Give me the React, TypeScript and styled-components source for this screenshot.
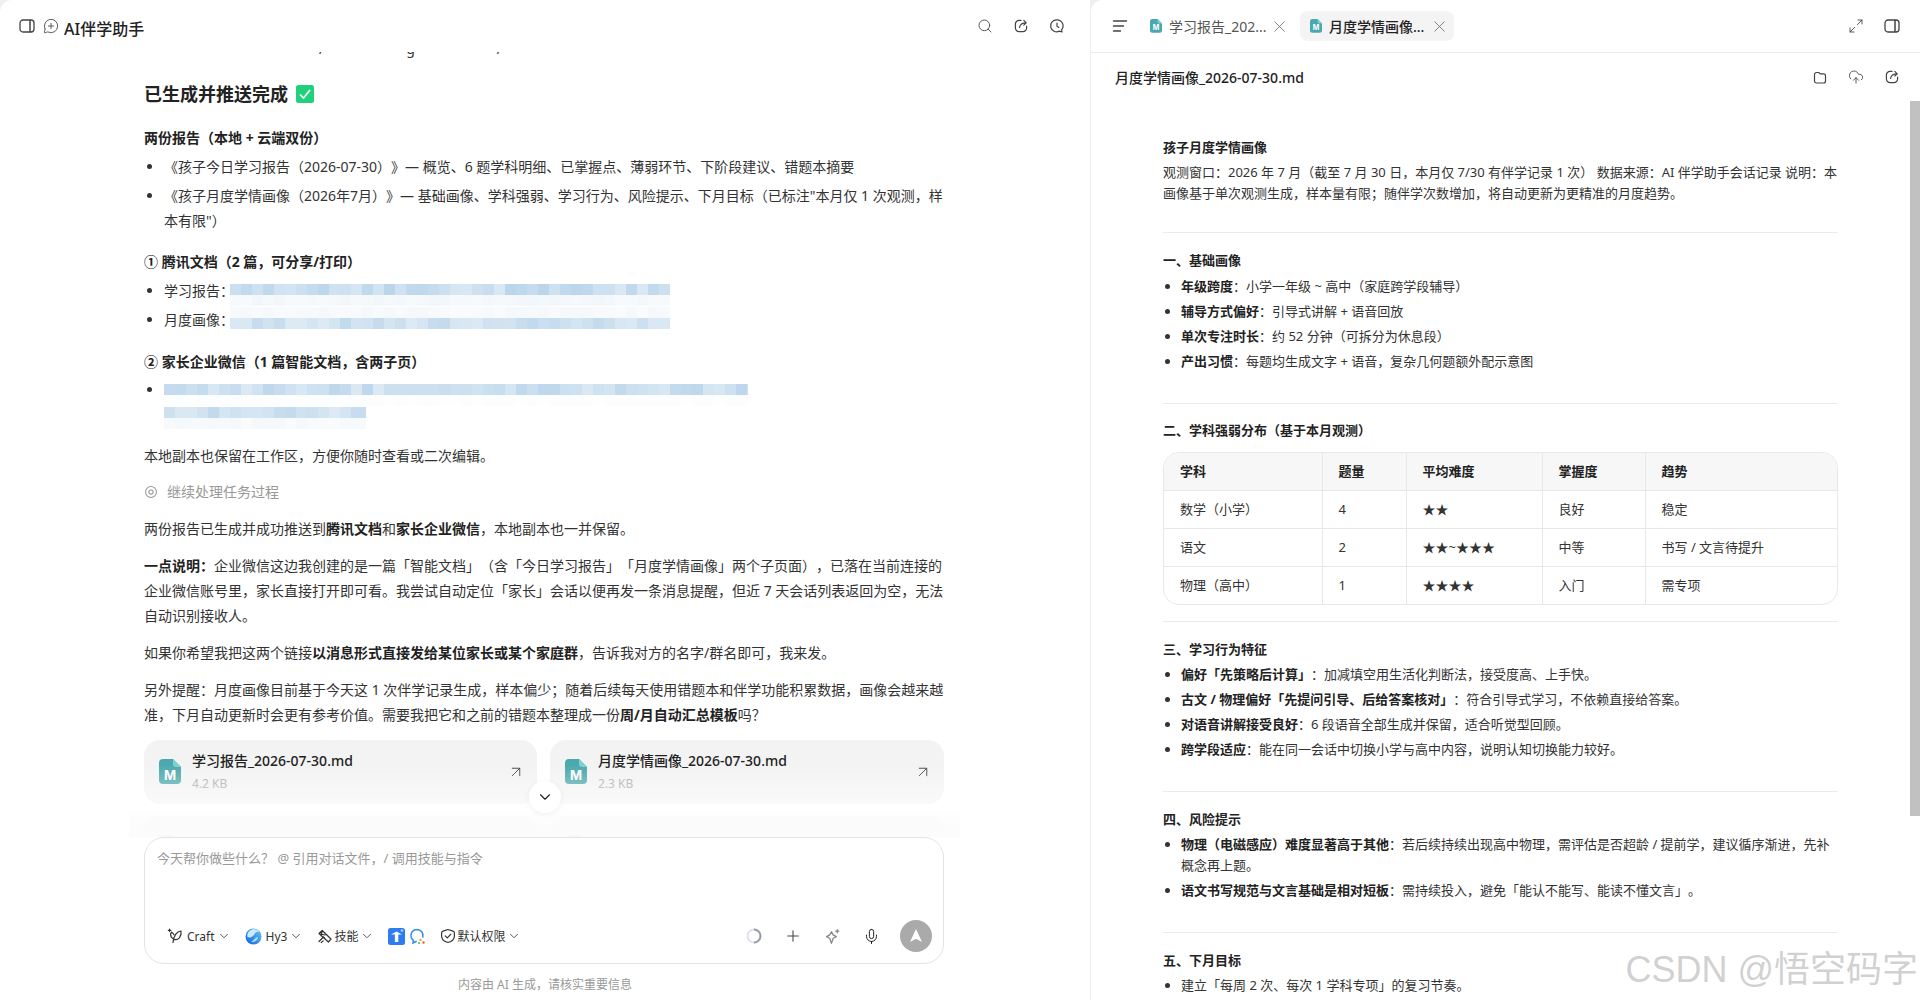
import React from 'react'
import styled, { createGlobalStyle } from 'styled-components'
import { ArrowUpRight, ChevronDown, CloudUpload, Maximize2, MessageCirclePlus, Mic, Plus, Search, X } from 'lucide-react'

const GlobalStyle = createGlobalStyle`
  html, body {
    margin: 0;
    height: 100%;
    overflow: hidden;
    background: #efefef;
  }
  body, button {
    font-family: 'Noto Sans', 'Noto Sans CJK SC', sans-serif;
    text-spacing-trim: space-all;
  }
`

const Screen = styled.div`
  display: flex;
  width: 1920px;
  height: 1000px;
  position: relative;
  overflow: hidden;
`

const ChatPane = styled.section`
  width: 1090px;
  height: 1000px;
  background: #fff;
  border-radius: 12px 0 0 0;
  display: flex;
  flex-direction: column;
`

const ChatHeader = styled.header`
  height: 52px;
  flex: none;
  display: flex;
  align-items: center;
  justify-content: space-between;
  padding: 0 25px 0 19px;
  color: #444;
`

const HeaderGroup = styled.div<{ $gap: number }>`
  display: flex;
  align-items: center;
  gap: ${(p) => p.$gap}px;
`

const AppTitle = styled.h1`
  margin: 5px 0 0 -3px;
  font-size: 16px;
  line-height: 24px;
  font-weight: 500;
  color: #222;
`

const ChatBody = styled.div`
  flex: 1;
  min-height: 0;
  position: relative;
  overflow: hidden;
  padding: 0 146px 0 144px;
  font-size: 14px;
  line-height: 25px;
  color: #333;
`

const ClippedLine = styled.div`
  height: 8px;
  overflow: hidden;
  display: flex;
  gap: 82px;
  padding-left: 175px;
  line-height: 0;
  color: #333;
  span {
    margin-top: -3px;
  }
`

const DoneTitle = styled.h2`
  display: flex;
  align-items: center;
  gap: 8px;
  margin: 20px 0 0;
  font-size: 18px;
  line-height: 28px;
  font-weight: 700;
  color: #222;
`

const SectionTitle = styled.h3<{ $top: number }>`
  margin: ${(p) => p.$top}px 0 0;
  font-size: 14px;
  line-height: 25px;
  font-weight: 700;
  color: #222;
`

const BulletList = styled.ul<{ $top: number }>`
  margin: ${(p) => p.$top}px 0 0;
  padding: 0 0 0 20px;
  li + li {
    margin-top: 4px;
  }
`

const Para = styled.p<{ $top?: number }>`
  margin: ${(p) => p.$top ?? 12}px 0 0;
  b {
    font-weight: 700;
    color: #222;
  }
`

const Continue = styled.div`
  display: flex;
  align-items: center;
  gap: 9px;
  margin-top: 11px;
  color: #999;
`

const CardGrid = styled.div<{ $top: number }>`
  display: grid;
  grid-template-columns: 393px 394px;
  column-gap: 13px;
  margin-top: ${(p) => p.$top}px;
`

const FileCard = styled.div`
  height: 64px;
  display: flex;
  align-items: center;
  gap: 11px;
  padding: 0 12px 0 15px;
  background: #f3f3f3;
  border-radius: 16px;
  color: #444;
`

const FileMeta = styled.div`
  flex: 1;
  min-width: 0;
`

const FileName = styled.div`
  font-size: 14px;
  line-height: 22px;
  font-weight: 500;
  color: #222;
`

const FileSize = styled.div`
  font-size: 12px;
  line-height: 20px;
  color: #aaa;
  margin-top: 2px;
`

const Fade = styled.div`
  position: absolute;
  left: 129px;
  right: 130px;
  bottom: 0;
  height: 72px;
  background: linear-gradient(
    rgba(255, 255, 255, 0),
    rgba(255, 255, 255, 0.55) 53%,
    rgba(253, 253, 253, 0.84) 69%,
    rgba(252, 252, 252, 0.97)
  );
`

const ScrollDown = styled.button`
  position: absolute;
  left: 529px;
  top: 729px;
  width: 32px;
  height: 32px;
  padding: 0;
  border: 0;
  border-radius: 50%;
  background: #fff;
  box-shadow: 0 1px 6px rgba(0, 0, 0, 0.06);
  display: grid;
  place-items: center;
  color: #222;
`

const Composer = styled.div`
  flex: none;
  width: 800px;
  height: 127px;
  margin-left: 144px;
  box-sizing: border-box;
  border: 1px solid #e4e4e4;
  border-radius: 20px;
  background: #fff;
  display: flex;
  flex-direction: column;
  justify-content: space-between;
  padding: 10px 11px 11px 12px;
`

const Placeholder = styled.div`
  font-size: 13px;
  line-height: 20px;
  color: #999;
`

const Toolbar = styled.div`
  display: flex;
  align-items: center;
  justify-content: space-between;
  height: 32px;
  padding-left: 10px;
`

const ToolGroup = styled.div`
  display: flex;
  align-items: center;
  gap: 14px;
`

const ToolChip = styled.div<{ $gap?: number }>`
  display: flex;
  align-items: center;
  gap: ${(p) => p.$gap ?? 4}px;
  font-size: 12px;
  color: #333;
  svg.chev {
    color: #444;
    margin-left: ${(p) => 2 - (p.$gap ?? 4)}px;
  }
`

const ActionGroup = styled.div`
  display: flex;
  align-items: center;
  gap: 22px;
  color: #444;
`

const SendButton = styled.button`
  width: 32px;
  height: 32px;
  margin-left: -2px;
  padding: 0;
  border: 0;
  border-radius: 50%;
  background: #aaa;
  display: grid;
  place-items: center;
`

const Disclaimer = styled.div`
  flex: none;
  margin: 11px 0 5px;
  font-size: 12px;
  line-height: 20px;
  text-align: center;
  color: #999;
`

const DocPane = styled.section`
  flex: 1;
  height: 1000px;
  margin-left: 1px;
  background: #fff;
  border-radius: 12px 0 0 0;
  display: flex;
  flex-direction: column;
`

const TabBar = styled.header`
  height: 53px;
  flex: none;
  box-sizing: border-box;
  padding: 0 20px 0 21px;
  display: flex;
  align-items: center;
  justify-content: space-between;
  border-bottom: 1px solid #ebebeb;
  color: #444;
`

const Tabs = styled.div`
  display: flex;
  align-items: center;
`

const MenuSlot = styled.div`
  display: flex;
  margin-right: 12px;
`

const Tab = styled.div<{ $active?: boolean }>`
  display: flex;
  align-items: center;
  gap: 7px;
  height: 30px;
  width: 154px;
  margin-left: ${(p) => (p.$active ? 6 : 0)}px;
  box-sizing: border-box;
  padding: 0 3px 0 10px;
  border-radius: 8px;
  font-size: 14px;
  white-space: nowrap;
  background: ${(p) => (p.$active ? '#f4f4f4' : 'transparent')};
  color: ${(p) => (p.$active ? '#222' : '#555')};
  font-weight: ${(p) => (p.$active ? 500 : 400)};
  svg.close {
    color: #666;
    flex: none;
    margin-left: -2px;
  }
`

const TabLabel = styled.span`
  width: 96px;
  flex: none;
`

const FileBar = styled.div`
  height: 48px;
  flex: none;
  box-sizing: border-box;
  padding: 0 20px 0 24px;
  display: flex;
  align-items: center;
  justify-content: space-between;
  font-size: 14px;
  font-weight: 500;
  color: #222;
  svg {
    color: #444;
  }
`

const DocScroll = styled.div`
  flex: 1;
  min-height: 0;
  position: relative;
  overflow: hidden;
  padding: 36px 82px 0 72px;
  font-size: 13px;
  line-height: 21px;
  color: #333;
`

const ScrollThumb = styled.div`
  position: absolute;
  right: 0;
  top: 0;
  width: 10px;
  height: 715px;
  background: #c1c1c1;
`

const DocTitle = styled.h2`
  margin: 0;
  font-size: 13px;
  line-height: 21px;
  font-weight: 700;
  color: #222;
`

const DocText = styled.p`
  margin: 4px 0 0;
`

const Rule = styled.hr<{ $top: number }>`
  height: 1px;
  border: 0;
  margin: ${(p) => p.$top}px 0 0;
  background: #ebebeb;
`

const DocHeading = styled.h3<{ $top: number }>`
  margin: ${(p) => p.$top}px 0 0;
  font-size: 13px;
  line-height: 25px;
  font-weight: 700;
  color: #222;
`

const DocList = styled.ul<{ $top?: number }>`
  margin: ${(p) => p.$top ?? 0}px 0 0;
  padding: 0 0 0 18px;
  li {
    padding: 2px 0;
  }
  b {
    font-weight: 700;
    color: #222;
  }
`

const TableBox = styled.div`
  margin-top: 9px;
  border: 1px solid #e8e8e8;
  border-radius: 16px;
  overflow: hidden;
`

const Table = styled.table`
  width: 100%;
  table-layout: fixed;
  border-collapse: collapse;
  th,
  td {
    height: 38px;
    box-sizing: border-box;
    padding: 0 16px;
    text-align: left;
    border-left: 1px solid #e8e8e8;
    border-top: 1px solid #e8e8e8;
  }
  th:first-child,
  td:first-child {
    border-left: 0;
  }
  th {
    border-top: 0;
    height: 37px;
    background: #f7f7f7;
    font-weight: 700;
    color: #222;
  }
`

const Watermark = styled.div`
  position: absolute;
  right: 2px;
  bottom: 6px;
  font-family: 'Liberation Sans', 'Noto Sans CJK SC', sans-serif;
  font-size: 36px;
  line-height: 48px;
  color: rgba(170, 170, 170, 0.55);
  text-shadow: 0 0 1px rgba(255, 255, 255, 0.9);
  white-space: nowrap;
`

const MosaicSvg = styled.svg<{ $top: number; $left: number }>`
  display: inline-block;
  vertical-align: top;
  margin: ${(p) => p.$top}px 0 -12px ${(p) => p.$left}px;
`

const IconSvg = styled.svg`
  flex: none;
`

const Mosaic = ({ width, alphas, top = 0, left = 0 }: { width: number; alphas: number[]; top?: number; left?: number }) => {
  const cols = Math.ceil(width / 11)
  return (
    <MosaicSvg $top={top} $left={left} width={width} height={alphas.length * 11}>
      {alphas.map((alpha, row) =>
        Array.from({ length: cols }, (_, col) => {
          const wave = Math.abs(Math.sin((col + 1) * 12.9898 + (row + 1) * width) * 43758.5453) % 1
          return (
            <rect
              key={`${row}-${col}`}
              x={col * 11}
              y={row * 11}
              width={11}
              height={11}
              fill="#b0cfe8"
              fillOpacity={alpha * (0.6 + wave * 0.5)}
            />
          )
        }),
      )}
    </MosaicSvg>
  )
}

const FileIcon = ({ size }: { size: number }) => (
  <IconSvg width={size} height={size * 1.14} viewBox="0 0 22 25">
    <path d="M4 0h10l8 8v13a4 4 0 0 1-4 4H4a4 4 0 0 1-4-4V4a4 4 0 0 1 4-4z" fill="#4ba8ad" />
    <path d="M14 0l8 8h-5a3 3 0 0 1-3-3z" fill="#7fd0d0" />
    <text x="11" y="21" textAnchor="middle" fontSize="13" fontWeight="700" fill="#fff" fontFamily="Inter, sans-serif">
      M
    </text>
  </IconSvg>
)

const Icon = ({ children, size = 16 }: { children: React.ReactNode; size?: number }) => (
  <IconSvg
    width={size}
    height={size}
    viewBox="0 0 16 16"
    fill="none"
    stroke="currentColor"
    strokeWidth="1.2"
    strokeLinecap="round"
    strokeLinejoin="round"
  >
    {children}
  </IconSvg>
)

const PanelIcon = () => (
  <Icon>
    <rect x="1" y="2" width="14" height="12" rx="3" strokeWidth="1.3" />
    <path d="M11 2.600v10.800" strokeWidth="1.500" />
  </Icon>
)

const ShareIcon = () => (
  <Icon>
    <path d="M8 2.400H6a3.600 3.600 0 0 0-3.600 3.600v4A3.600 3.600 0 0 0 6 13.600h4a3.600 3.600 0 0 0 3.600-3.600V8" />
    <path d="M6.500 9.500C7 6.500 9 4.800 13 4.800M10.800 2.400L13.200 4.800 10.800 7.200" />
  </Icon>
)

const HistoryIcon = () => (
  <Icon>
    <path d="M8 1.800a6 6 0 0 1 4.600 9.900L13 14l-2.600-.9A6 6 0 1 1 8 1.800z" />
    <path d="M8 5v3.200l1.800 1.200" />
  </Icon>
)

const MenuIcon = () => (
  <Icon>
    <path d="M1.500 3h13M1.500 8h10M1.500 13h7" strokeWidth="1.400" />
  </Icon>
)

const FolderIcon = () => (
  <Icon>
    <path d="M2.500 5.500A2 2 0 0 1 4.500 3.500h2.200l1.500 1.400h3.300a2 2 0 0 1 2 2V12a2 2 0 0 1-2 2h-7a2 2 0 0 1-2-2z" />
  </Icon>
)

const TargetIcon = () => (
  <Icon size={14}>
    <circle cx="8" cy="8" r="6.200" />
    <circle cx="8" cy="8" r="2.400" />
  </Icon>
)

const CraftIcon = () => (
  <Icon>
    <path d="M6 14.500c.4-3.400 1-6 2.600-8.200C10 4.400 12 3.200 14 3c.4 2.400-.2 5-1.600 6.800-1.400 1.600-3.400 2-5.200 1.600" />
    <path d="M6.600 11c-1.800-.8-3-2.400-3-4.400 0-1 .4-1.800 1-2.400 1 .6 1.800 1.400 2.400 2.600" />
    <path d="M2.600 1v2.600M1.300 2.300h2.600" />
  </Icon>
)

const SkillIcon = () => (
  <Icon>
    <path d="M2 5.500L5.200 2.500 14 11l-2.600 3zM5.200 2.500l-1 5.500M2 5.500l6 1.500" />
    <path d="M2 13.500l4.500-4.500 1.200 1.200M4.200 14.500l2-1.600" />
  </Icon>
)

const ScopeIcon = () => (
  <Icon>
    <path d="M8 1.500l5 1.600c1 .3 1.400 1 1.400 2v3c0 3.200-3 5.600-6.400 6.400C4.600 13.700 1.600 11.300 1.600 8.100v-3c0-1 .4-1.700 1.400-2z" />
    <path d="M5.200 7.800l2.100 2.100 3.600-3.800" />
  </Icon>
)

const SparkIcon = () => (
  <Icon size={17}>
    <path d="M7 3.500l1.600 3 3 1.600-3 1.600L7 14.500l-1.600-4.800-3-1.600 3-1.600z" stroke="#888" />
    <path d="M12.500 1.500v3M11 3h3" stroke="#888" />
  </Icon>
)

const HyLogo = () => (
  <IconSvg width="17" height="17" viewBox="0 0 17 17">
    <defs>
      <linearGradient id="hy" x1="0" y1="1" x2="1" y2="0">
        <stop offset="0" stopColor="#0b63e0" />
        <stop offset="1" stopColor="#6bc6f5" />
      </linearGradient>
    </defs>
    <circle cx="8.500" cy="8.500" r="8" fill="url(#hy)" />
    <path d="M2.500 9c3 1.500 6-1 7-3s3-2.500 5-2c-1-1.500-3.500-3-6-2.800C4 2 1.500 5.500 2.500 9z" fill="#cfeafa" />
    <path d="M6 14c3 .5 6-1 7-4 .4-1.200-1-1.500-2-.5C9.500 11 8 12.800 6 14z" fill="#a8dcf7" />
  </IconSvg>
)

const DocsLogo = () => (
  <IconSvg width="17" height="17" viewBox="0 0 17 17">
    <rect width="17" height="17" rx="2.500" fill="#2f7bf2" />
    <path d="M3 6.500L8.500 3.500 14 6.500H10.300V14H6.900V6.500z" fill="#fff" />
    <circle cx="14" cy="2.600" r="1.400" fill="#8fd3ff" />
  </IconSvg>
)

const QqSearchLogo = () => (
  <IconSvg width="17" height="17" viewBox="0 0 17 17" fill="none">
    <path
      d="M8 1.500a6 6 0 0 1 5.800 7.500M8 1.500A6 6 0 0 0 4.400 12.300L4 15l3.200-1.500"
      stroke="#2d8cf0"
      strokeWidth="1.500"
      strokeLinecap="round"
    />
    <circle cx="11.500" cy="12" r="1.200" fill="#f5a623" />
    <circle cx="14.500" cy="14.500" r="1.200" fill="#ef5b4c" />
    <circle cx="10" cy="15" r="1" fill="#36c46b" />
  </IconSvg>
)

const Spinner = () => (
  <IconSvg width="16" height="16" viewBox="0 0 16 16" fill="none">
    <circle cx="8" cy="8" r="6.500" stroke="#dfe2ea" strokeWidth="2" />
    <path d="M8 1.500a6.500 6.500 0 0 1 0 13" stroke="#9a9ca8" strokeWidth="2" />
  </IconSvg>
)

const CheckBadge = () => (
  <IconSvg width="18" height="18" viewBox="0 0 18 18">
    <rect width="18" height="18" rx="2.500" fill="#21d07a" />
    <path d="M4 9.500l3.500 3.500L14 5" fill="none" stroke="#fff" strokeWidth="1.700" />
  </IconSvg>
)

const Chev = () => <ChevronDown className="chev" size={14} strokeWidth={1.5} />

export default function App() {
  return (
    <Screen>
      <GlobalStyle />
      <ChatPane>
        <ChatHeader>
          <HeaderGroup $gap={8}>
            <PanelIcon />
            <MessageCirclePlus size={16} strokeWidth={1.3} />
            <AppTitle>AI伴学助手</AppTitle>
          </HeaderGroup>
          <HeaderGroup $gap={20}>
            <Search size={16} strokeWidth={1.3} />
            <ShareIcon />
            <HistoryIcon />
          </HeaderGroup>
        </ChatHeader>
        <ChatBody>
          <ClippedLine>
            <span>/</span>
            <span>g</span>
            <span>/</span>
          </ClippedLine>
          <DoneTitle>
            已生成并推送完成
            <CheckBadge />
          </DoneTitle>
          <SectionTitle $top={17}>两份报告（本地 + 云端双份）</SectionTitle>
          <BulletList $top={4}>
            <li>《孩子今日学习报告（2026-07-30）》— 概览、6 题学科明细、已掌握点、薄弱环节、下阶段建议、错题本摘要</li>
            <li>《孩子月度学情画像（2026年7月）》— 基础画像、学科强弱、学习行为、风险提示、下月目标（已标注"本月仅 1 次观测，样本有限"）</li>
          </BulletList>
          <SectionTitle $top={16}>① 腾讯文档（2 篇，可分享/打印）</SectionTitle>
          <BulletList $top={4}>
            <li>
              学习报告：
              <Mosaic width={440} alphas={[0.8, 0.16]} top={6} left={-4} />
            </li>
            <li>
              月度画像：
              <Mosaic width={440} alphas={[0.12, 0.7]} left={-4} />
            </li>
          </BulletList>
          <SectionTitle $top={17}>② 家长企业微信（1 篇智能文档，含两子页）</SectionTitle>
          <BulletList $top={3}>
            <li>
              <Mosaic width={584} alphas={[0.75, 0.04]} top={7} />
              <br />
              <Mosaic width={202} alphas={[0.7, 0.12]} top={5} />
            </li>
          </BulletList>
          <Para $top={16}>本地副本也保留在工作区，方便你随时查看或二次编辑。</Para>
          <Continue>
            <TargetIcon />
            继续处理任务过程
          </Continue>
          <Para>
            两份报告已生成并成功推送到<b>腾讯文档</b>和<b>家长企业微信</b>，本地副本也一并保留。
          </Para>
          <Para>
            <b>一点说明：</b>企业微信这边我创建的是一篇「智能文档」（含「今日学习报告」「月度学情画像」两个子页面），已落在当前连接的企业微信账号里，家长直接打开即可看。我尝试自动定位「家长」会话以便再发一条消息提醒，但近 7 天会话列表返回为空，无法自动识别接收人。
          </Para>
          <Para>
            如果你希望我把这两个链接<b>以消息形式直接发给某位家长或某个家庭群</b>，告诉我对方的名字/群名即可，我来发。
          </Para>
          <Para>
            另外提醒：月度画像目前基于今天这 1 次伴学记录生成，样本偏少；随着后续每天使用错题本和伴学功能积累数据，画像会越来越准，下月自动更新时会更有参考价值。需要我把它和之前的错题本整理成一份<b>周/月自动汇总模板</b>吗？
          </Para>
          <CardGrid $top={13}>
            <FileCard>
              <FileIcon size={22} />
              <FileMeta>
                <FileName>学习报告_2026-07-30.md</FileName>
                <FileSize>4.2 KB</FileSize>
              </FileMeta>
              <ArrowUpRight size={18} strokeWidth={1.3} />
            </FileCard>
            <FileCard>
              <FileIcon size={22} />
              <FileMeta>
                <FileName>月度学情画像_2026-07-30.md</FileName>
                <FileSize>2.3 KB</FileSize>
              </FileMeta>
              <ArrowUpRight size={18} strokeWidth={1.3} />
            </FileCard>
          </CardGrid>
          <CardGrid $top={12}>
            <FileCard>
              <FileIcon size={22} />
              <FileMeta>
                <FileName>错题本.md</FileName>
              </FileMeta>
            </FileCard>
            <FileCard>
              <FileIcon size={22} />
              <FileMeta>
                <FileName>语文讲解_中继成立.md</FileName>
              </FileMeta>
            </FileCard>
          </CardGrid>
          <Fade />
          <ScrollDown>
            <ChevronDown size={18} strokeWidth={1.5} />
          </ScrollDown>
        </ChatBody>
        <Composer>
          <Placeholder>今天帮你做些什么？ @ 引用对话文件，/ 调用技能与指令</Placeholder>
          <Toolbar>
            <ToolGroup>
              <ToolChip>
                <CraftIcon />
                Craft
                <Chev />
              </ToolChip>
              <ToolChip>
                <HyLogo />
                Hy3
                <Chev />
              </ToolChip>
              <ToolChip $gap={1}>
                <SkillIcon />
                技能
                <Chev />
              </ToolChip>
              <ToolChip>
                <DocsLogo />
                <QqSearchLogo />
              </ToolChip>
              <ToolChip $gap={1}>
                <ScopeIcon />
                默认权限
                <Chev />
              </ToolChip>
            </ToolGroup>
            <ActionGroup>
              <Spinner />
              <Plus size={18} strokeWidth={1.4} />
              <SparkIcon />
              <Mic size={17} strokeWidth={1.4} color="#222" />
              <SendButton>
                <svg width="16" height="16" viewBox="0 0 16 16">
                  <path d="M8 1l6 13-6-3.200L2 14z" fill="#fff" />
                </svg>
              </SendButton>
            </ActionGroup>
          </Toolbar>
        </Composer>
        <Disclaimer>内容由 AI 生成，请核实重要信息</Disclaimer>
      </ChatPane>
      <DocPane>
        <TabBar>
          <Tabs>
            <MenuSlot>
              <MenuIcon />
            </MenuSlot>
            <Tab>
              <FileIcon size={12} />
              <TabLabel>学习报告_202...</TabLabel>
              <X className="close" size={19} strokeWidth={1} />
            </Tab>
            <Tab $active>
              <FileIcon size={12} />
              <TabLabel>月度学情画像...</TabLabel>
              <X className="close" size={19} strokeWidth={1} />
            </Tab>
          </Tabs>
          <HeaderGroup $gap={20}>
            <Maximize2 size={16} strokeWidth={1.3} />
            <PanelIcon />
          </HeaderGroup>
        </TabBar>
        <FileBar>
          月度学情画像_2026-07-30.md
          <HeaderGroup $gap={20}>
            <FolderIcon />
            <CloudUpload size={16} strokeWidth={1.3} />
            <ShareIcon />
          </HeaderGroup>
        </FileBar>
        <DocScroll>
          <ScrollThumb />
          <DocTitle>孩子月度学情画像</DocTitle>
          <DocText>
            观测窗口：2026 年 7 月（截至 7 月 30 日，本月仅 7/30 有伴学记录 1 次） 数据来源：AI 伴学助手会话记录 说明：本画像基于单次观测生成，样本量有限；随伴学次数增加，将自动更新为更精准的月度趋势。
          </DocText>
          <Rule $top={28} />
          <DocHeading $top={15}>一、基础画像</DocHeading>
          <DocList $top={1}>
            <li><b>年级跨度</b>：小学一年级 ~ 高中（家庭跨学段辅导）</li>
            <li><b>辅导方式偏好</b>：引导式讲解 + 语音回放</li>
            <li><b>单次专注时长</b>：约 52 分钟（可拆分为休息段）</li>
            <li><b>产出习惯</b>：每题均生成文字 + 语音，复杂几何题额外配示意图</li>
          </DocList>
          <Rule $top={29} />
          <DocHeading $top={14}>二、学科强弱分布（基于本月观测）</DocHeading>
          <TableBox>
            <Table>
              <colgroup>
                <col width={158} />
                <col width={84} />
                <col width={136} />
                <col width={103} />
                <col />
              </colgroup>
              <thead>
                <tr>
                  <th>学科</th>
                  <th>题量</th>
                  <th>平均难度</th>
                  <th>掌握度</th>
                  <th>趋势</th>
                </tr>
              </thead>
              <tbody>
                <tr>
                  <td>数学（小学）</td>
                  <td>4</td>
                  <td>★★</td>
                  <td>良好</td>
                  <td>稳定</td>
                </tr>
                <tr>
                  <td>语文</td>
                  <td>2</td>
                  <td>★★~★★★</td>
                  <td>中等</td>
                  <td>书写 / 文言待提升</td>
                </tr>
                <tr>
                  <td>物理（高中）</td>
                  <td>1</td>
                  <td>★★★★</td>
                  <td>入门</td>
                  <td>需专项</td>
                </tr>
              </tbody>
            </Table>
          </TableBox>
          <Rule $top={16} />
          <DocHeading $top={15}>三、学习行为特征</DocHeading>
          <DocList>
            <li><b>偏好「先策略后计算」</b>：加减填空用生活化判断法，接受度高、上手快。</li>
            <li><b>古文 / 物理偏好「先提问引导、后给答案核对」</b>：符合引导式学习，不依赖直接给答案。</li>
            <li><b>对语音讲解接受良好</b>：6 段语音全部生成并保留，适合听觉型回顾。</li>
            <li><b>跨学段适应</b>：能在同一会话中切换小学与高中内容，说明认知切换能力较好。</li>
          </DocList>
          <Rule $top={29} />
          <DocHeading $top={15}>四、风险提示</DocHeading>
          <DocList>
            <li><b>物理（电磁感应）难度显著高于其他</b>：若后续持续出现高中物理，需评估是否超龄 / 提前学，建议循序渐进，先补概念再上题。</li>
            <li><b>语文书写规范与文言基础是相对短板</b>：需持续投入，避免「能认不能写、能读不懂文言」。</li>
          </DocList>
          <Rule $top={29} />
          <DocHeading $top={15}>五、下月目标</DocHeading>
          <DocList>
            <li>建立「每周 2 次、每次 1 学科专项」的复习节奏。</li>
          </DocList>
        </DocScroll>
      </DocPane>
      <Watermark>CSDN @悟空码字</Watermark>
    </Screen>
  )
}
